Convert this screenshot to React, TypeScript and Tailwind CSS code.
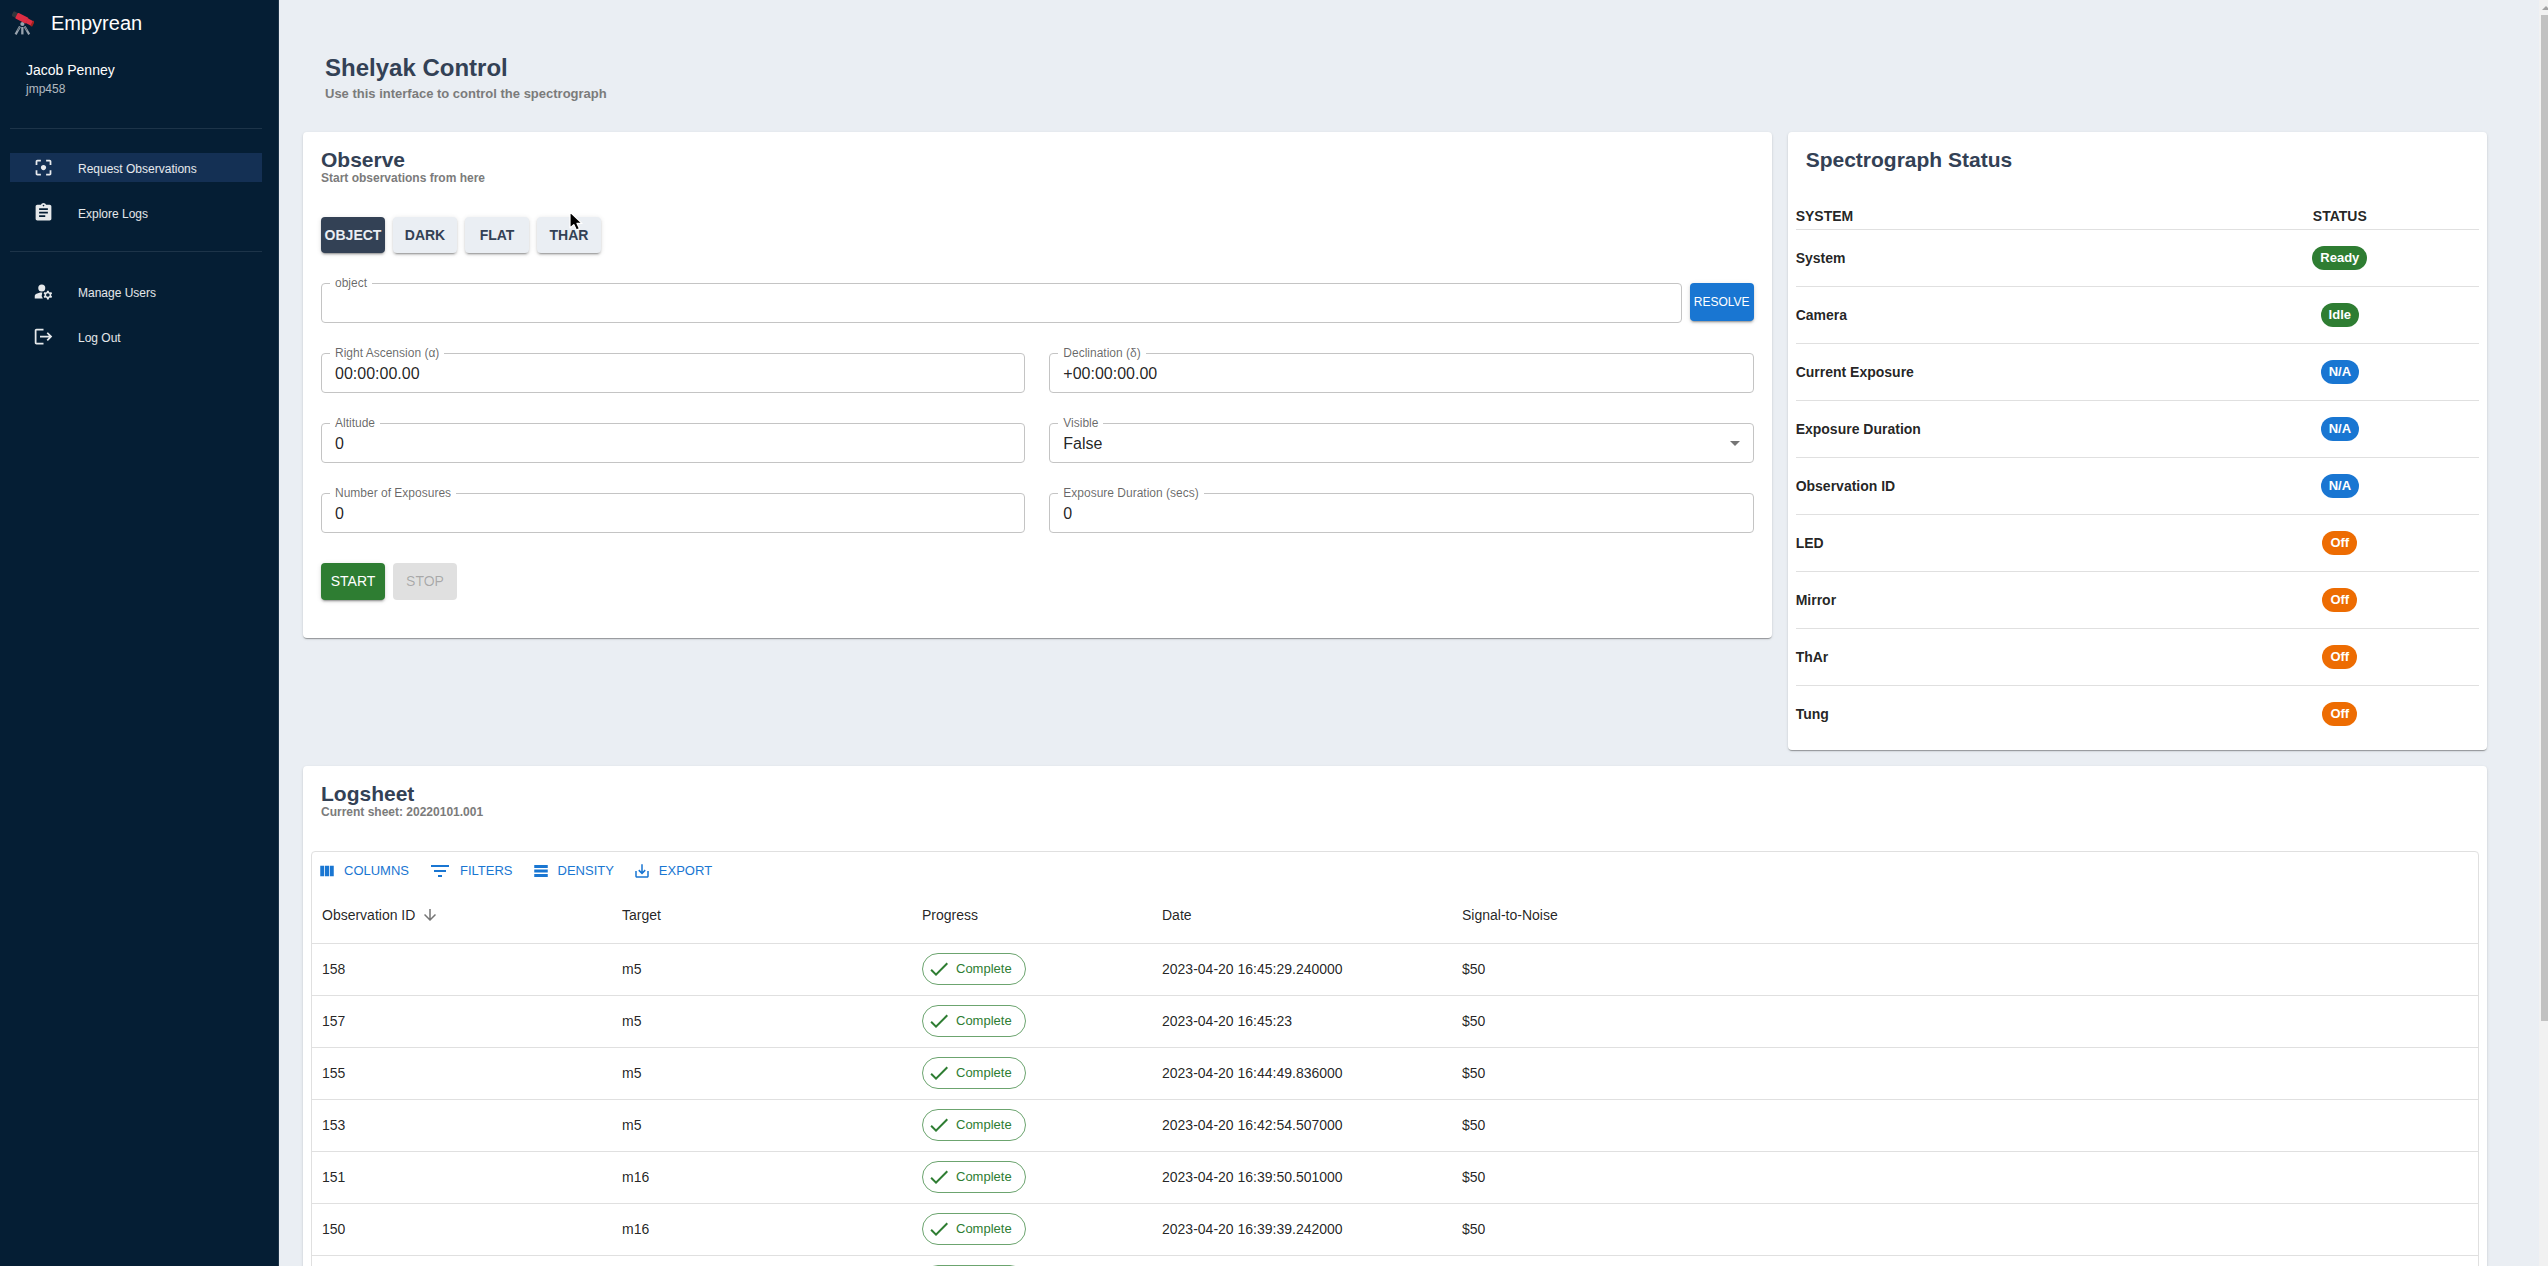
import type { ReactNode } from "react";
import {
  MdArrowDownward,
  MdArrowDropDown,
  MdAssignment,
  MdCheck,
  MdFilterCenterFocus,
  MdLogout,
  MdManageAccounts,
} from "react-icons/md";

const cardClass =
  "rounded bg-white shadow-[0px_2px_1px_-1px_rgba(0,0,0,0.2),0px_1px_1px_0px_rgba(0,0,0,0.14),0px_1px_3px_0px_rgba(0,0,0,0.12)]";
const raised =
  "shadow-[0px_3px_1px_-2px_rgba(0,0,0,0.2),0px_2px_2px_0px_rgba(0,0,0,0.14),0px_1px_5px_0px_rgba(0,0,0,0.12)]";

function TelescopeLogo() {
  return (
    <svg viewBox="0 0 22 24" className="h-6 w-[22px]" aria-hidden="true">
      <path d="M8 15.5 3.6 23.4" stroke="#99a3ae" strokeWidth="2.2" />
      <path d="M12.6 15.5 17.2 23.4" stroke="#99a3ae" strokeWidth="2.2" />
      <rect x="9.2" y="16" width="2.3" height="7.4" fill="#99a3ae" />
      <path d="M7.6 16 5.6 19.5M13 16 14.9 19.5" stroke="#55626d" strokeWidth="1" />
      <circle cx="10.4" cy="13" r="2.1" fill="#99a3ae" />
      <g transform="rotate(27 11 8)">
        <rect x="-0.8" y="5" width="5.4" height="5.4" rx="1" fill="#31373d" />
        <rect x="3.6" y="4.6" width="12" height="6.4" rx="1" fill="#dd2e44" />
        <rect x="15.2" y="5.2" width="6.2" height="5.2" rx="0.6" fill="#dd2e44" />
        <rect x="20.6" y="4.8" width="2" height="6" rx="0.6" fill="#a0201c" />
      </g>
    </svg>
  );
}

function NavItem({ icon, label, active = false }: { icon: ReactNode; label: string; active?: boolean }) {
  return (
    <a
      href="#"
      className={`flex h-[29px] items-center gap-6 pl-[23px] text-xs text-white/90 ${active ? "bg-[#143054]" : ""}`}
    >
      {icon}
      <span className="pt-0.5">{label}</span>
    </a>
  );
}

function Sidebar() {
  return (
    <aside className="w-[279px] shrink-0 border-r border-[#1d3449] bg-[#051e34] text-white">
      <div className="flex h-[46px] items-center gap-[17px] pl-3">
        <TelescopeLogo />
        <span className="text-xl">Empyrean</span>
      </div>
      <div className="pt-[14px] pl-[26px]">
        <p className="text-sm leading-5">Jacob Penney</p>
        <p className="text-xs leading-[18px] text-white/70">jmp458</p>
      </div>
      <nav className="mr-4 ml-[10px] mt-[30px]">
        <div className="flex flex-col gap-4 border-t border-[#1d3449] pt-6 pb-6">
          <NavItem active icon={<MdFilterCenterFocus size={21} />} label="Request Observations" />
          <NavItem icon={<MdAssignment size={21} />} label="Explore Logs" />
        </div>
        <div className="flex flex-col gap-4 border-t border-[#1d3449] pt-[25px]">
          <NavItem icon={<MdManageAccounts size={21} />} label="Manage Users" />
          <NavItem icon={<MdLogout size={21} />} label="Log Out" />
        </div>
      </nav>
    </aside>
  );
}

function CardHeader({ title, subtitle }: { title: string; subtitle?: string }) {
  return (
    <header className="pt-4 pl-[18px]">
      <h2 className="text-[21px] leading-6 font-bold text-[#334155]">{title}</h2>
      {subtitle && <p className="text-xs leading-[13px] font-bold text-[#7b7b7b]">{subtitle}</p>}
    </header>
  );
}

function Field({
  id,
  label,
  value,
  options,
  className = "",
}: {
  id: string;
  label: string;
  value?: string;
  options?: string[];
  className?: string;
}) {
  const box =
    "h-10 w-full rounded border border-[#c4c4c4] bg-white px-[13px] pt-0.5 text-base text-black/87 outline-none";
  return (
    <div className={`relative ${className}`}>
      {options ? (
        <>
          <select id={id} defaultValue={value} className={`${box} appearance-none`}>
            {options.map((o) => (
              <option key={o}>{o}</option>
            ))}
          </select>
          <MdArrowDropDown size={24} className="pointer-events-none absolute top-2 right-[7px] text-black/54" />
        </>
      ) : (
        <input id={id} type="text" defaultValue={value} className={box} />
      )}
      <label htmlFor={id} className="absolute -top-2 left-[9px] bg-white px-[5px] text-xs leading-4 text-black/60">
        {label}
      </label>
    </div>
  );
}

function MousePointer() {
  return (
    <svg viewBox="0 0 14 20" className="pointer-events-none absolute -top-1.5 left-8 h-5 w-[14px]" aria-hidden="true">
      <path
        d="M1 1v16l3.8-3.4L7.4 19l3-1.4L8 12.4h5z"
        fill="#000"
        stroke="#fff"
        strokeWidth="1.2"
        strokeLinejoin="round"
      />
    </svg>
  );
}

function ObservePanel() {
  const modes = ["OBJECT", "DARK", "FLAT", "THAR"];
  return (
    <section className={`${cardClass} pb-[38px]`}>
      <CardHeader title="Observe" subtitle="Start observations from here" />
      <div className="px-[18px]">
        <div className="mt-8 flex gap-2">
          {modes.map((m) => (
            <div key={m} className="relative">
              <button
                type="button"
                className={`h-9 w-16 rounded text-sm font-bold ${raised} ${
                  m === "OBJECT" ? "bg-[#334155] text-[#eaeef3]" : "bg-[#eaeef3] text-[#334155]"
                }`}
              >
                {m}
              </button>
              {m === "THAR" && <MousePointer />}
            </div>
          ))}
        </div>
        <form className="mt-[30px]" onSubmit={(e) => e.preventDefault()}>
          <div className="flex items-start gap-2">
            <Field id="object" label="object" className="flex-1" />
            <button type="button" className={`h-[38px] w-16 rounded bg-[#1976d2] text-xs text-white ${raised}`}>
              RESOLVE
            </button>
          </div>
          <div className="mt-[30px] grid grid-cols-2 gap-x-6 gap-y-[30px]">
            <Field id="ra" label="Right Ascension (α)" value="00:00:00.00" />
            <Field id="dec" label="Declination (δ)" value="+00:00:00.00" />
            <Field id="alt" label="Altitude" value="0" />
            <Field id="visible" label="Visible" value="False" options={["False", "True"]} />
            <Field id="count" label="Number of Exposures" value="0" />
            <Field id="duration" label="Exposure Duration (secs)" value="0" />
          </div>
          <div className="mt-[30px] flex gap-2">
            <button type="submit" className={`h-[37px] w-16 rounded bg-[#2e7d32] pb-0.5 text-sm text-white ${raised}`}>
              START
            </button>
            <button type="button" disabled className="h-[37px] w-16 rounded bg-black/12 pb-0.5 text-sm text-black/26">
              STOP
            </button>
          </div>
        </form>
      </div>
    </section>
  );
}

const statuses: [string, string, string][] = [
  ["System", "Ready", "bg-[#2e7d32]"],
  ["Camera", "Idle", "bg-[#2e7d32]"],
  ["Current Exposure", "N/A", "bg-[#1976d2]"],
  ["Exposure Duration", "N/A", "bg-[#1976d2]"],
  ["Observation ID", "N/A", "bg-[#1976d2]"],
  ["LED", "Off", "bg-[#ed6c02]"],
  ["Mirror", "Off", "bg-[#ed6c02]"],
  ["ThAr", "Off", "bg-[#ed6c02]"],
  ["Tung", "Off", "bg-[#ed6c02]"],
];

function StatusPanel() {
  return (
    <section className={`${cardClass} pb-2`}>
      <CardHeader title="Spectrograph Status" />
      <div className="mt-8 px-2">
        <table className="w-full table-fixed text-sm font-bold text-black/87">
          <thead>
            <tr className="h-[25px] border-b border-[#e0e0e0]">
              <th className="w-[405px] text-left">SYSTEM</th>
              <th className="text-center">STATUS</th>
            </tr>
          </thead>
          <tbody>
            {statuses.map(([name, status, color]) => (
              <tr key={name} className="h-[57px] border-b border-[#e0e0e0] last:border-b-0">
                <th scope="row" className="text-left">
                  {name}
                </th>
                <td className="text-center">
                  <span className={`inline-block rounded-full px-2 text-[13px] leading-6 text-white ${color}`}>
                    {status}
                  </span>
                </td>
              </tr>
            ))}
          </tbody>
        </table>
      </div>
    </section>
  );
}

const tools: { label: string; size: string; path: string }[] = [
  { label: "COLUMNS", size: "size-[18px]", path: "M14.67 5v14H9.33V5zM15.67 19H21V5h-5.33zM8.33 19V5H3v14z" },
  { label: "FILTERS", size: "size-6", path: "M10 18h4v-2h-4zM3 6v2h18V6zm3 7h12v-2H6z" },
  { label: "DENSITY", size: "size-[18px]", path: "M21 8H3V4h18zM21 10H3v4h18zM21 16H3v4h18z" },
  {
    label: "EXPORT",
    size: "size-[18px]",
    path: "M19 12v7H5v-7H3v7c0 1.1.9 2 2 2h14c1.1 0 2-.9 2-2v-7zm-6 .67l2.59-2.58L17 11.5l-5 5-5-5 1.41-1.41L11 12.67V3h2z",
  },
];

const rows: [string, string, string][] = [
  ["158", "m5", "2023-04-20 16:45:29.240000"],
  ["157", "m5", "2023-04-20 16:45:23"],
  ["155", "m5", "2023-04-20 16:44:49.836000"],
  ["153", "m5", "2023-04-20 16:42:54.507000"],
  ["151", "m16", "2023-04-20 16:39:50.501000"],
  ["150", "m16", "2023-04-20 16:39:39.242000"],
  ["149", "m16", "2023-04-20 16:39:28.104000"],
];

function Logsheet() {
  return (
    <section className={`${cardClass} pb-2`}>
      <CardHeader title="Logsheet" subtitle="Current sheet: 20220101.001" />
      <div className="mx-2 mt-8 rounded border border-[#e0e0e0]">
        <div className="flex h-9 items-center gap-[19px] pt-0.5 pl-[6px]">
          {tools.map((t) => (
            <button key={t.label} type="button" className="flex h-7 items-center gap-2 text-[13px] text-[#1976d2]">
              <svg viewBox="0 0 24 24" className={`${t.size} fill-current`} aria-hidden="true">
                <path d={t.path} />
              </svg>
              {t.label}
            </button>
          ))}
        </div>
        <table className="w-full table-fixed text-left text-sm text-black/87">
          <thead>
            <tr className="h-[55px] border-b border-[#e0e0e0]">
              <th className="w-[300px] px-[10px] font-normal">
                <span className="flex items-center gap-[6px]">
                  Observation ID
                  <MdArrowDownward size={18} className="text-black/54" />
                </span>
              </th>
              <th className="w-[300px] px-[10px] font-normal">Target</th>
              <th className="w-[240px] px-[10px] font-normal">Progress</th>
              <th className="w-[300px] px-[10px] font-normal">Date</th>
              <th className="px-[10px] font-normal">Signal-to-Noise</th>
            </tr>
          </thead>
          <tbody>
            {rows.map(([id, target, date]) => (
              <tr key={id} className="h-[52px] border-b border-[#e0e0e0]">
                <td className="px-[10px]">{id}</td>
                <td className="px-[10px]">{target}</td>
                <td className="px-[10px]">
                  <span className="flex h-8 w-fit items-center gap-[5px] rounded-full border border-[#2e7d32]/70 pr-[13px] pl-1 text-[13px] text-[#2e7d32]">
                    <MdCheck size={24} />
                    Complete
                  </span>
                </td>
                <td className="px-[10px]">{date}</td>
                <td className="px-[10px]">$50</td>
              </tr>
            ))}
          </tbody>
        </table>
      </div>
    </section>
  );
}

function ScrollTrack() {
  return (
    <div className="flex h-full w-[9px] shrink-0 flex-col overflow-hidden bg-[#f1f1f1] pl-[2px]" aria-hidden="true">
      <div className="flex h-[15px] items-center pl-px">
        <svg viewBox="0 0 8 4" className="h-1 w-2 shrink-0">
          <path d="M0 4 4 0 8 4z" fill="#a3a3a3" />
        </svg>
      </div>
      <div className="flex-[1006] bg-[#c1c1c1]" />
      <div className="flex-[245]" />
    </div>
  );
}

export default function App() {
  return (
    <div className="flex h-screen overflow-hidden bg-[#eaeef3] font-['Liberation_Sans',Arial,sans-serif]">
      <Sidebar />
      <main className="min-w-0 flex-1 overflow-hidden pr-[52px] pl-6">
        <header className="pt-[52px] pl-[22px]">
          <h1 className="text-2xl leading-8 font-bold text-[#334155]">Shelyak Control</h1>
          <p className="text-[13px] leading-5 font-bold text-[#7b7b7b]">Use this interface to control the spectrograph</p>
        </header>
        <div className="mt-7 grid grid-cols-[21fr_10fr] items-start gap-4">
          <ObservePanel />
          <StatusPanel />
          <div className="col-span-2">
            <Logsheet />
          </div>
        </div>
      </main>
      <ScrollTrack />
    </div>
  );
}
